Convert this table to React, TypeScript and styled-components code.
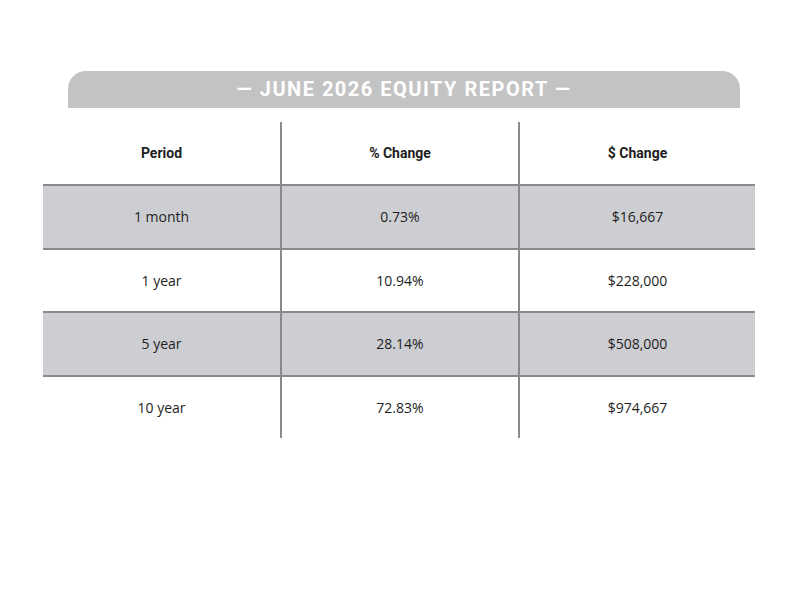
import styled, { createGlobalStyle } from "styled-components";

const GlobalStyle = createGlobalStyle`
  html, body {
    margin: 0;
    padding: 0;
    background: #ffffff;
  }
  body {
    font-family: "Open Sans", "Liberation Sans", sans-serif;
    color: #1c1c1c;
  }
`;

const Page = styled.div`
  width: 800px;
  height: 600px;
  padding: 71px 45px 0 43px;
  box-sizing: border-box;
  display: flex;
  flex-direction: column;
`;

const TitleBar = styled.div`
  margin: 0 15px 0 25px;
  height: 37px;
  padding-bottom: 2px;
  box-sizing: border-box;
  background: #c4c3c4;
  border-radius: 18px 18px 0 0;
  display: flex;
  align-items: center;
  justify-content: center;
  color: #ffffff;
  font-family: "Roboto", "Liberation Sans", sans-serif;
  font-weight: 700;
  font-size: 20px;
  letter-spacing: 1.5px;
`;

const Table = styled.div`
  margin-top: 14px;
  display: grid;
  grid-template-columns: 239px 238px 235px;
`;

const Row = styled.div<{ $shaded?: boolean; $last?: boolean }>`
  display: contents;
  & > div {
    background: ${(p) => (p.$shaded ? "#cdced2" : "#ffffff")};
    border-bottom: ${(p) => (p.$last ? "none" : "2px solid #8a8a8e")};
  }
`;

const Cell = styled.div<{ $head?: boolean }>`
  height: ${(p) => (p.$head ? "62px" : "61.5px")};
  display: flex;
  align-items: center;
  justify-content: center;
  font-size: 14px;
  font-family: ${(p) =>
    p.$head ? `"Roboto", "Liberation Sans", sans-serif` : `"Open Sans", "Liberation Sans", sans-serif`};
  font-weight: ${(p) => (p.$head ? 700 : 400)};
  color: #1e1e1e;
  &:not(:last-child) {
    border-right: 2px solid #8a8a8e;
  }
`;

const rows = [
  ["1 month", "0.73%", "$16,667"],
  ["1 year", "10.94%", "$228,000"],
  ["5 year", "28.14%", "$508,000"],
  ["10 year", "72.83%", "$974,667"],
];

export default function App() {
  return (
    <>
      <GlobalStyle />
      <Page>
        <TitleBar>— JUNE 2026 EQUITY REPORT —</TitleBar>
        <Table>
          <Row>
            <Cell $head>Period</Cell>
            <Cell $head>% Change</Cell>
            <Cell $head>$ Change</Cell>
          </Row>
          {rows.map((r, i) => (
            <Row key={r[0]} $shaded={i % 2 === 0} $last={i === rows.length - 1}>
              {r.map((v) => (
                <Cell key={v}>{v}</Cell>
              ))}
            </Row>
          ))}
        </Table>
      </Page>
    </>
  );
}
